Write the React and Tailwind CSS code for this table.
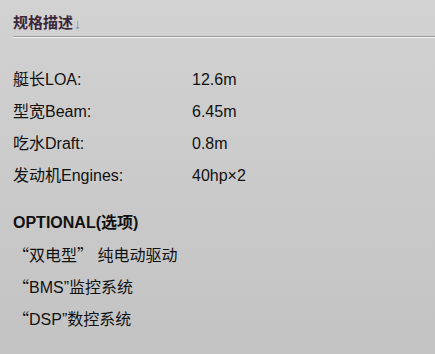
import React from 'react';

const specs = [
  { label: '艇长LOA:', value: '12.6m' },
  { label: '型宽Beam:', value: '6.45m' },
  { label: '吃水Draft:', value: '0.8m' },
  { label: '发动机Engines:', value: '40hp×2' },
];

const cjk = { fontFamily: '"Noto Sans CJK SC", sans-serif' };

export default function App() {
  return (
    <div
      className="w-[435px] h-[354px] overflow-hidden bg-gradient-to-b from-[#d2d2d2] to-[#c3c3c3] text-[#111]"
      style={{ fontFamily: '"Liberation Sans", "Noto Sans CJK SC", sans-serif' }}
    >
      {/* section header with engraved rule */}
      <div className="ml-[13px] pt-[13px]">
        <h2 className="h-[20px] leading-[20px] text-[15px] font-bold text-[#3b2739] flex items-end">
          规格描述
          <span className="text-[14px] font-normal text-[#6b8bb3] leading-[18px] ml-[1px]">↓</span>
        </h2>
        <div className="mt-[3px] border-t border-[#9a9a9a]" />
        <div className="border-t border-[#f4f4f4]" />
      </div>

      <div className="px-[13px] mt-[26px] text-[16px]">
        {specs.map((s) => (
          <div key={s.label} className="flex h-[32px] items-center">
            <span className="w-[179px]">{s.label}</span>
            <span>{s.value}</span>
          </div>
        ))}

        <div className="mt-[15px] h-[32px] flex items-center font-bold">OPTIONAL(选项)</div>
        <div className="h-[32px] flex items-center">
          <span>
            <span style={cjk}>“</span>双电型<span style={cjk}>”</span> 纯电动驱动
          </span>
        </div>
        <div className="h-[32px] flex items-center">
          <span>
            <span style={cjk}>“</span>BMS”监控系统
          </span>
        </div>
        <div className="h-[32px] flex items-center">
          <span>
            <span style={cjk}>“</span>DSP”数控系统
          </span>
        </div>
      </div>
    </div>
  );
}
